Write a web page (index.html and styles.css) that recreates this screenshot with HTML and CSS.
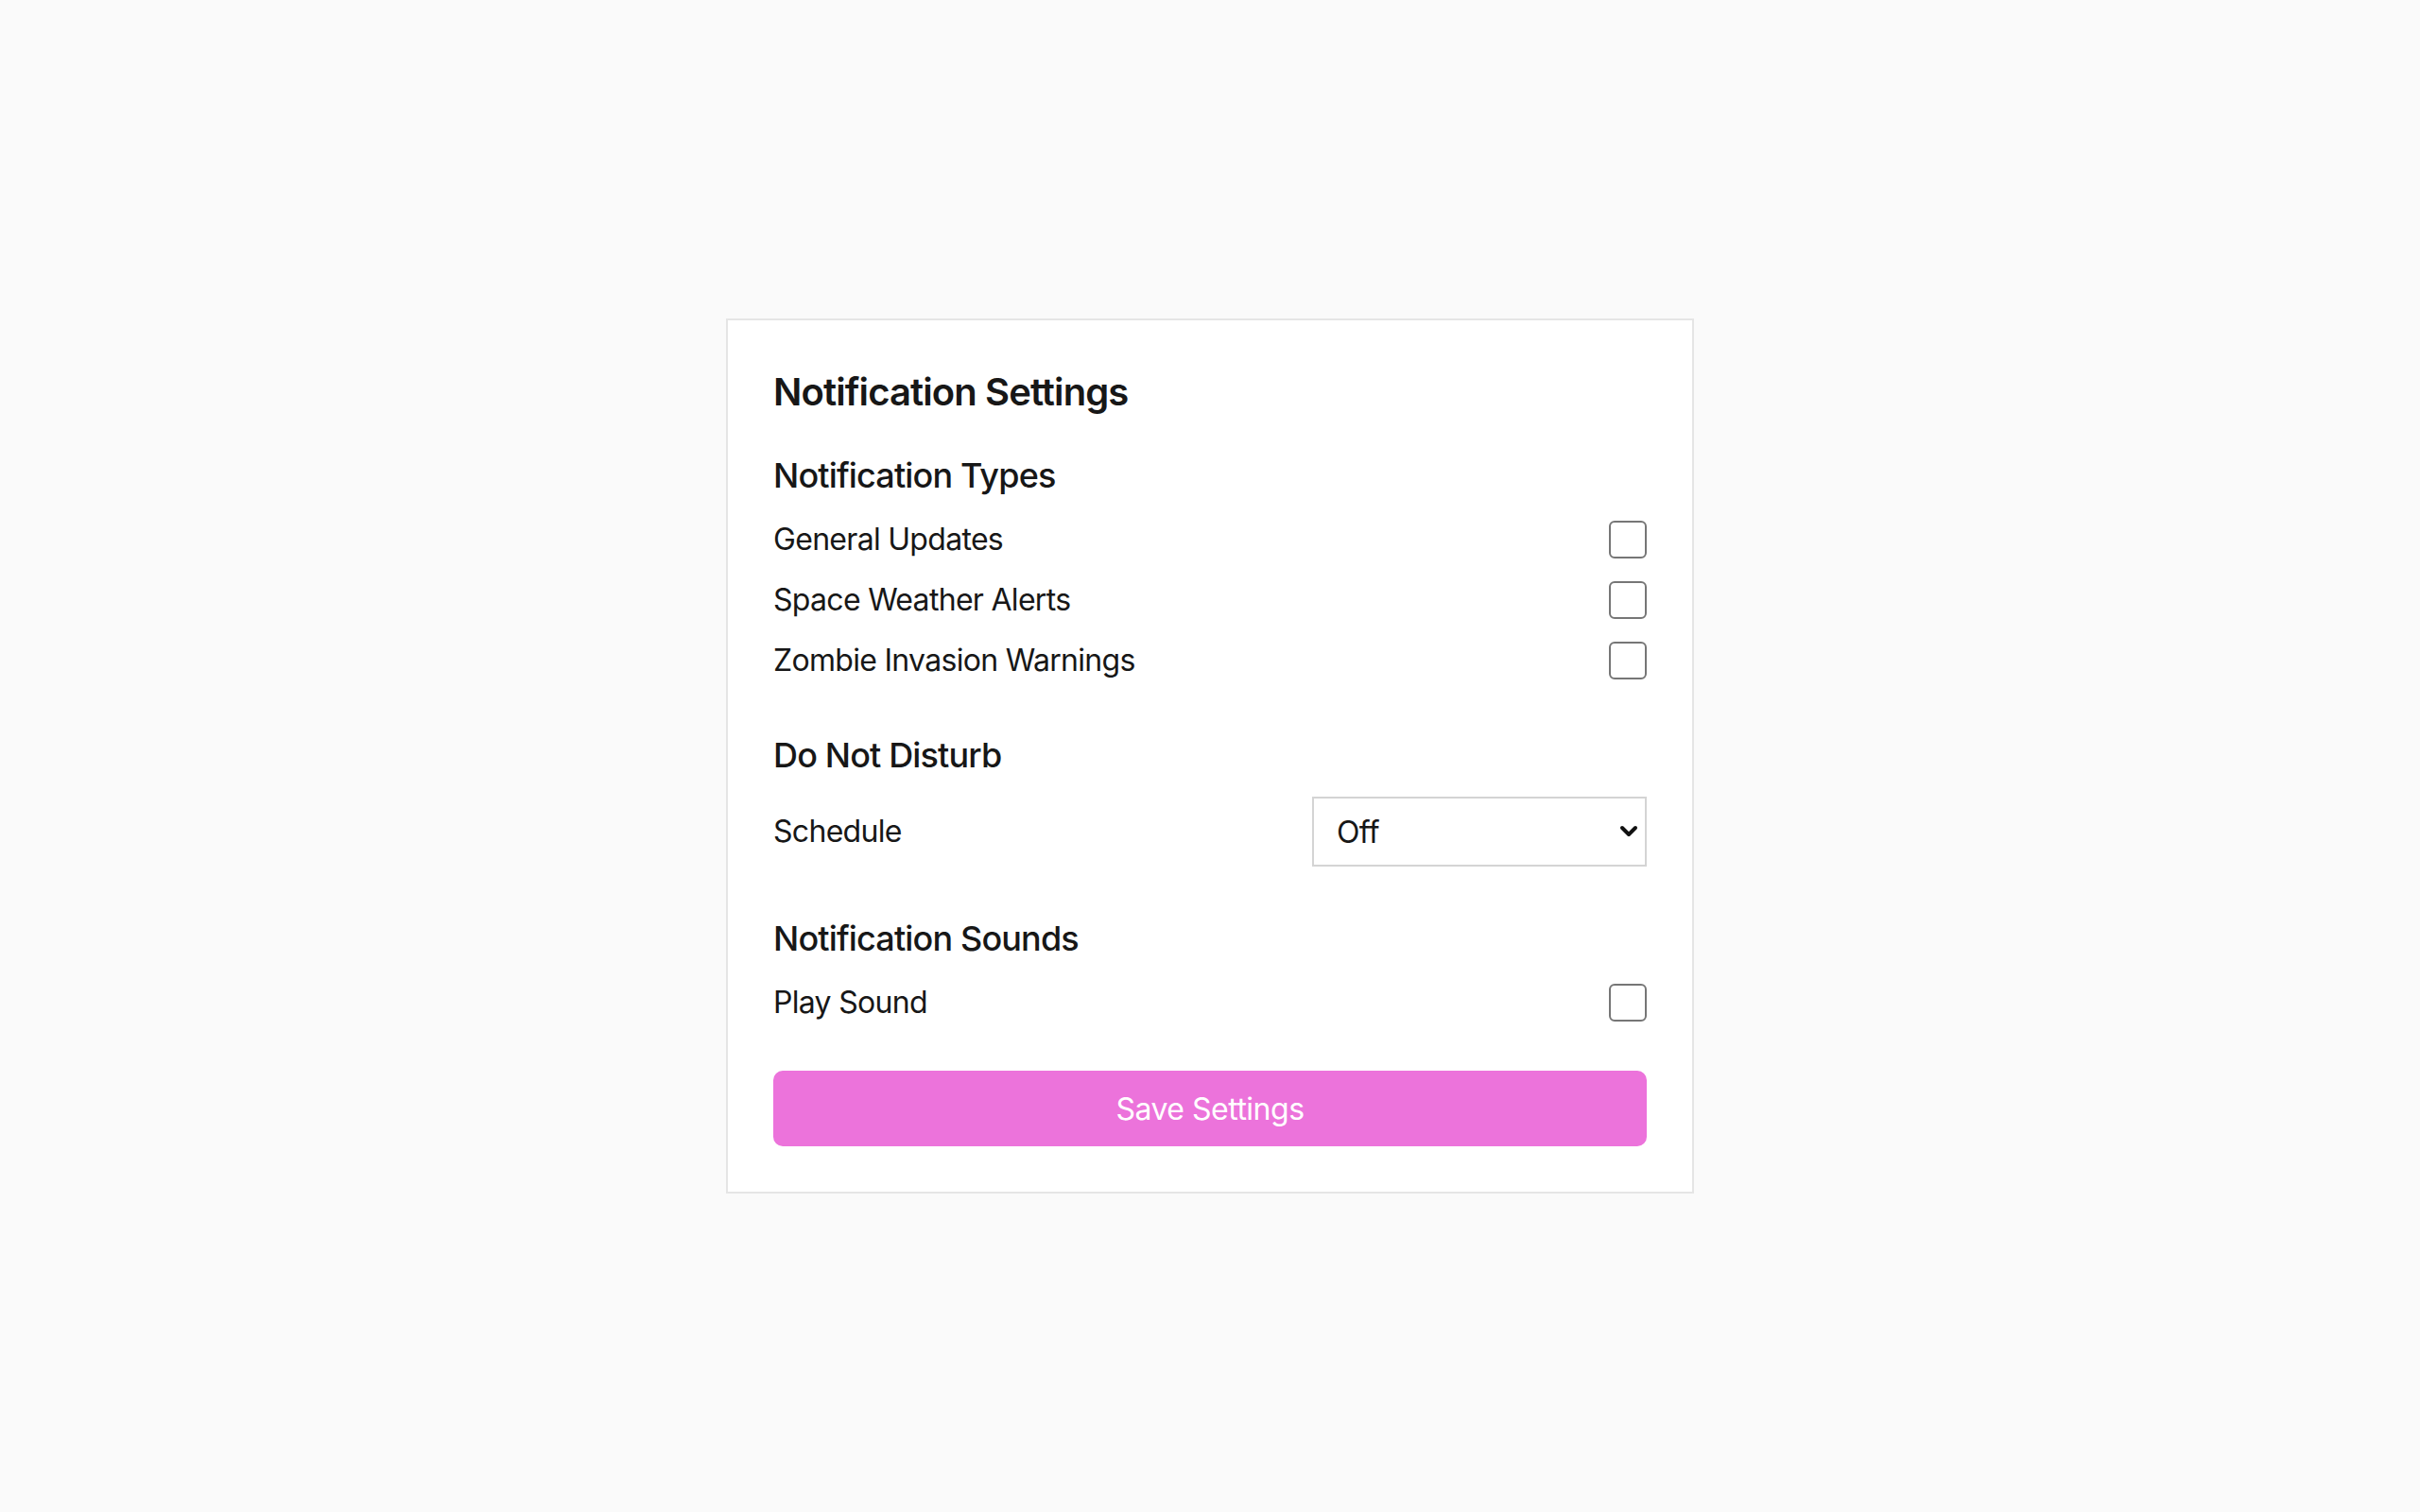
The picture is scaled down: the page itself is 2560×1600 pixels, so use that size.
FILE: index.html
```html
<!DOCTYPE html>
<html lang="en">
<head>
    <meta charset="UTF-8" />
    <meta name="viewport" content="width=device-width, initial-scale=1.0" />
    <title>Notification Settings</title>
    <link rel="stylesheet" href="styles.css">
</head>
<body>
    <div class="card">
        <h1 class="title">Notification Settings</h1>

        <div class="section">
            <h2 class="section-title">Notification Types</h2>
            <div class="options">
                <label class="option">
                    <span>General Updates</span>
                    <input type="checkbox" class="check">
                </label>
                <label class="option">
                    <span>Space Weather Alerts</span>
                    <input type="checkbox" class="check">
                </label>
                <label class="option">
                    <span>Zombie Invasion Warnings</span>
                    <input type="checkbox" class="check">
                </label>
            </div>
        </div>

        <div class="section">
            <h2 class="section-title">Do Not Disturb</h2>
            <div class="options">
                <label class="option">
                    <span>Schedule</span>
                    <span class="select-wrap">
                        <select class="select">
                            <option>Off</option>
                            <option>Nights</option>
                            <option>Weekends</option>
                        </select>
                        <svg class="chevron" width="20" height="14" viewBox="0 0 20 14">
                            <polyline points="3,3 10,10 17,3" fill="none" stroke="#111" stroke-width="4" stroke-linecap="round" stroke-linejoin="round" />
                        </svg>
                    </span>
                </label>
            </div>
        </div>

        <div class="section">
            <h2 class="section-title">Notification Sounds</h2>
            <div class="options">
                <label class="option">
                    <span>Play Sound</span>
                    <input type="checkbox" class="check">
                </label>
            </div>
        </div>

        <button class="save-btn">Save Settings</button>
    </div>
</body>
</html>
```

FILE: styles.css
```css
body {
    font-family: Inter, "Noto Sans", sans-serif;
    background-color: #fafafa;
    color: #171717;
    margin: 0;
    min-height: 100vh;
    display: flex;
    justify-content: center;
    align-items: center;
}

.card {
    width: 1024px;
    box-sizing: border-box;
    background: white;
    border: 2px solid #e5e5e5;
    padding: 48px;
}

.title {
    font-size: 40px;
    line-height: 56px;
    font-weight: 600;
    letter-spacing: -0.9px;
    margin: 0 0 32px;
}

.section {
    margin-bottom: 48px;
}

.section-title {
    font-size: 36px;
    line-height: 56px;
    font-weight: 500;
    letter-spacing: -0.85px;
    margin: 0 0 16px;
}

.options {
    display: flex;
    flex-direction: column;
    gap: 16px;
}

.option {
    display: flex;
    justify-content: space-between;
    align-items: center;
    font-size: 32px;
    line-height: 48px;
    letter-spacing: -0.7px;
}

.check {
    appearance: none;
    width: 40px;
    height: 40px;
    margin: 0;
    border: 2px solid #767676;
    border-radius: 6px;
    background: white;
    box-sizing: border-box;
}

.select-wrap {
    position: relative;
    display: flex;
}

.select {
    appearance: none;
    width: 354px;
    height: 74px;
    box-sizing: border-box;
    border: 2px solid #d4d4d4;
    border-radius: 0;
    background: white;
    font-family: inherit;
    font-size: 32px;
    letter-spacing: -0.7px;
    color: #171717;
    padding: 0 60px 0 24px;
}

.chevron {
    position: absolute;
    right: 9px;
    top: 30px;
    pointer-events: none;
}

.save-btn {
    display: block;
    width: 100%;
    height: 80px;
    border: none;
    border-radius: 10px;
    background-color: #ec73db;
    color: white;
    font-family: inherit;
    font-size: 32px;
    letter-spacing: -0.5px;
    cursor: pointer;
}
```
